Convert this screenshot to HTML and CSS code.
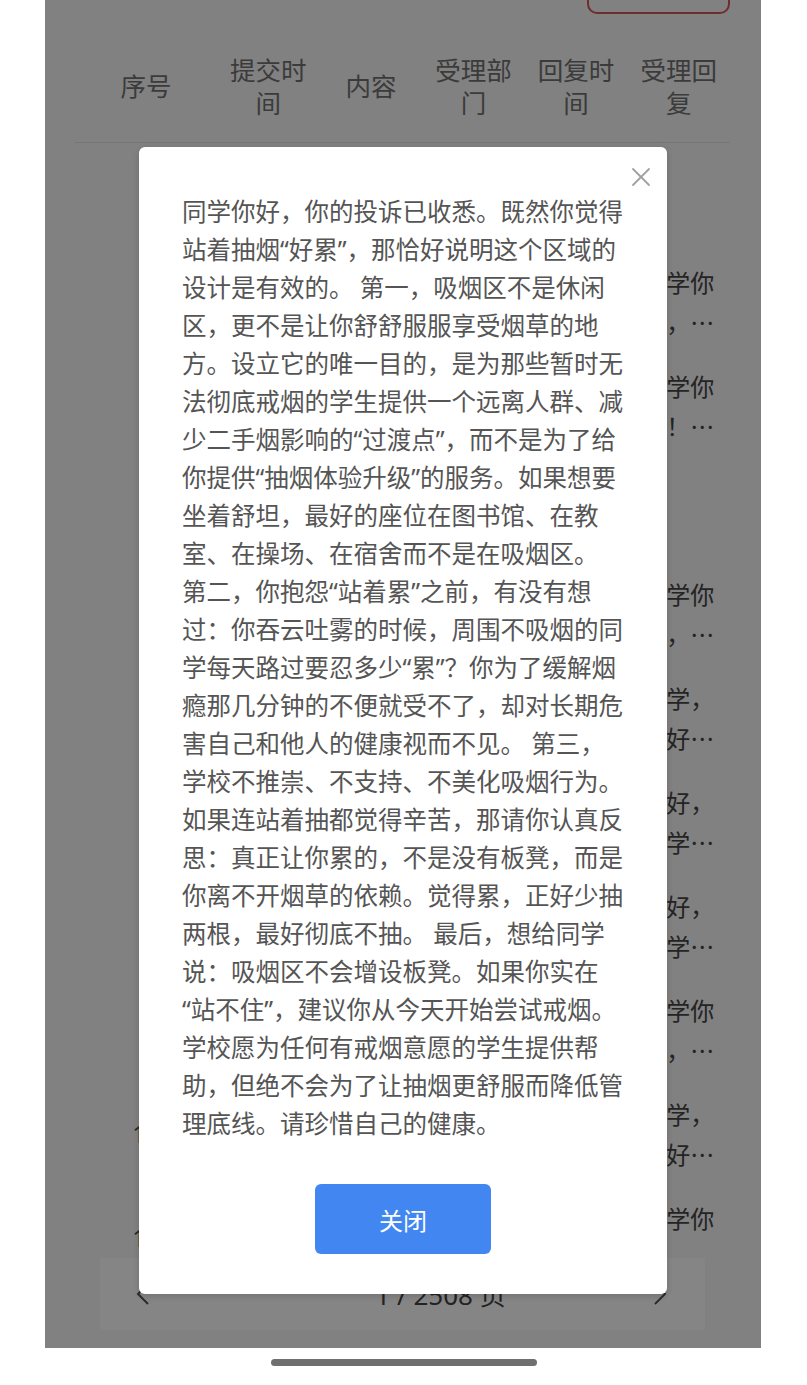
FILE: index.html
```html
<!DOCTYPE html>
<html lang="zh-CN">
<head>
<meta charset="utf-8">
<title>投诉回复</title>
<link rel="stylesheet" href="styles.css">
</head>
<body>
<div class="phone">
  <div class="topbar">
    <button class="top-btn" aria-label="筛选"></button>
  </div>

  <div class="table">
    <div class="thead">
      <div class="th">序号</div>
      <div class="th">提交时间</div>
      <div class="th">内容</div>
      <div class="th">受理部门</div>
      <div class="th">回复时间</div>
      <div class="th">受理回复</div>
    </div>
    <div class="tbody">
      <div class="tr"><div class="td num">1</div><div class="td"></div><div class="td"></div><div class="td"></div><div class="td"></div><div class="td"><div class="reply"></div></div></div>
      <div class="tr"><div class="td num">2</div><div class="td"></div><div class="td"></div><div class="td"></div><div class="td"></div><div class="td"><div class="reply">同学你好，感谢你的反馈</div></div></div>
      <div class="tr"><div class="td num">3</div><div class="td"></div><div class="td"></div><div class="td"></div><div class="td"></div><div class="td"><div class="reply">同学你好！已收到你的建议</div></div></div>
      <div class="tr"><div class="td num">4</div><div class="td"></div><div class="td"></div><div class="td"></div><div class="td"></div><div class="td"><div class="reply"></div></div></div>
      <div class="tr"><div class="td num">5</div><div class="td"></div><div class="td"></div><div class="td"></div><div class="td"></div><div class="td"><div class="reply">同学你好，你的问题已收悉</div></div></div>
      <div class="tr"><div class="td num">6</div><div class="td"></div><div class="td"></div><div class="td"></div><div class="td"></div><div class="td"><div class="reply">同学，你好，感谢反馈</div></div></div>
      <div class="tr"><div class="td num">7</div><div class="td"></div><div class="td"></div><div class="td"></div><div class="td"></div><div class="td"><div class="reply">你好，同学，已收到</div></div></div>
      <div class="tr"><div class="td num">8</div><div class="td"></div><div class="td"></div><div class="td"></div><div class="td"></div><div class="td"><div class="reply">你好，同学，感谢你的建议</div></div></div>
      <div class="tr"><div class="td num">9</div><div class="td"></div><div class="td"></div><div class="td"></div><div class="td"></div><div class="td"><div class="reply">同学你好，你的建议已收悉</div></div></div>
      <div class="tr"><div class="td num">10</div><div class="td"></div><div class="td"></div><div class="td"></div><div class="td"></div><div class="td"><div class="reply">同学，你好，已转交相关部门</div></div></div>
      <div class="tr"><div class="td num">11</div><div class="td"></div><div class="td"></div><div class="td"></div><div class="td"></div><div class="td"><div class="reply">同学你好，已收到你的反馈</div></div></div>
    </div>
  </div>

  <div class="pager">
    <svg class="chev" viewBox="0 0 14 24" width="14" height="24"><polyline points="12,2 2,12 12,22" /></svg>
    <span class="pager-text">1 / 2508 页</span>
    <svg class="chev" viewBox="0 0 14 24" width="14" height="24"><polyline points="2,2 12,12 2,22" /></svg>
  </div>

  <div class="mask"></div>

  <div class="modal">
    <button class="close" aria-label="关闭">
      <svg viewBox="0 0 20 20" width="20" height="20"><line x1="2" y1="2" x2="18" y2="18"/><line x1="18" y1="2" x2="2" y2="18"/></svg>
    </button>
    <div class="msg">
      <span class="ln">同学你好，你的投诉已收悉。既然你觉得</span>
      <span class="ln">站着抽烟“好累”，那恰好说明这个区域的</span>
      <span class="ln">设计是有效的。 第一，吸烟区不是休闲</span>
      <span class="ln">区，更不是让你舒舒服服享受烟草的地</span>
      <span class="ln">方。设立它的唯一目的，是为那些暂时无</span>
      <span class="ln">法彻底戒烟的学生提供一个远离人群、减</span>
      <span class="ln">少二手烟影响的“过渡点”，而不是为了给</span>
      <span class="ln">你提供“抽烟体验升级”的服务。如果想要</span>
      <span class="ln">坐着舒坦，最好的座位在图书馆、在教</span>
      <span class="ln">室、在操场、在宿舍而不是在吸烟区。</span>
      <span class="ln">第二，你抱怨“站着累”之前，有没有想</span>
      <span class="ln">过：你吞云吐雾的时候，周围不吸烟的同</span>
      <span class="ln">学每天路过要忍多少“累”？你为了缓解烟</span>
      <span class="ln">瘾那几分钟的不便就受不了，却对长期危</span>
      <span class="ln">害自己和他人的健康视而不见。 第三，</span>
      <span class="ln">学校不推崇、不支持、不美化吸烟行为。</span>
      <span class="ln">如果连站着抽都觉得辛苦，那请你认真反</span>
      <span class="ln">思：真正让你累的，不是没有板凳，而是</span>
      <span class="ln">你离不开烟草的依赖。觉得累，正好少抽</span>
      <span class="ln">两根，最好彻底不抽。 最后，想给同学</span>
      <span class="ln">说：吸烟区不会增设板凳。如果你实在</span>
      <span class="ln">“站不住”，建议你从今天开始尝试戒烟。</span>
      <span class="ln">学校愿为任何有戒烟意愿的学生提供帮</span>
      <span class="ln">助，但绝不会为了让抽烟更舒服而降低管</span>
      <span class="ln">理底线。请珍惜自己的健康。</span>
    </div>
    <div class="actions">
      <button class="primary">关闭</button>
    </div>
  </div>
</div>
<div class="home-bar"></div>
</body>
</html>
```

FILE: styles.css
```css
* { box-sizing: border-box; }

html, body {
  margin: 0;
  padding: 0;
  background: #ffffff;
}

body {
  width: 807px;
  height: 1385px;
  overflow: hidden;
  font-family: "Noto Sans", "Noto Sans CJK SC", sans-serif;
}

.phone {
  position: relative;
  margin-left: 45px;
  width: 716px;
  height: 1348px;
  overflow: hidden;
  background: #f7f7f7;
}

.topbar {
  height: 14px;
  display: flex;
  justify-content: flex-end;
  padding-right: 31px;
}

.top-btn {
  margin-top: -44px;
  width: 143px;
  height: 58px;
  border: 2px solid #d45858;
  border-radius: 10px;
  background: #f7f7f7;
}

.table {
  margin-left: 30px;
  width: 655px;
  font-family: "Noto Sans CJK SC", sans-serif;
}

.thead {
  margin-top: 16px;
  height: 113px;
  display: grid;
  grid-template-columns: 142px repeat(5, 1fr);
  align-items: center;
  border-bottom: 1px solid #e2e2e2;
  padding-bottom: 3px;
}

.th {
  padding: 0 10px;
  text-align: center;
  font-size: 25.5px;
  line-height: 33px;
  color: #727272;
}

.tbody {
  padding-top: 3px;
  height: 1110px;
  overflow: hidden;
}

.tr {
  height: 104px;
  display: grid;
  grid-template-columns: 142px repeat(5, 1fr);
  align-items: center;
  overflow: hidden;
}

.td {
  padding: 0 10px;
  text-align: center;
  font-size: 24px;
  line-height: 40px;
  color: #4a4a4a;
  overflow: hidden;
  white-space: nowrap;
}

.td.num {
  font-family: "Noto Sans", sans-serif;
  font-size: 24px;
}

.reply {
  width: 73px;
  margin: 0 auto;
  text-align: left;
  white-space: normal;
  display: -webkit-box;
  -webkit-box-orient: vertical;
  -webkit-line-clamp: 2;
  overflow: hidden;
  min-height: 80px;
  font-size: 24px;
  line-height: 40px;
  color: #454545;
}

.pager {
  position: absolute;
  left: 55px;
  right: 56px;
  top: 1258px;
  height: 72px;
  background: #ffffff;
  display: grid;
  grid-template-columns: auto 1fr auto;
  align-items: center;
  padding: 0 38px 0 36px;
}

.pager-text {
  text-align: center;
  padding-left: 78px;
  font-family: "Noto Sans", "Noto Sans CJK SC", sans-serif;
  font-size: 26px;
  color: #444444;
}

.chev polyline {
  fill: none;
  stroke: #555555;
  stroke-width: 2;
}

.mask {
  position: absolute;
  inset: 0;
  background: rgba(0, 0, 0, 0.48);
}

.modal {
  position: absolute;
  left: 94px;
  top: 147px;
  width: 528px;
  background: #ffffff;
  border-radius: 6px;
  box-shadow: 0 2px 6px rgba(0, 0, 0, 0.15);
  padding: 46px 0 40px 43px;
}

.close {
  position: absolute;
  top: 18px;
  right: 14px;
  width: 24px;
  height: 24px;
  padding: 2px;
  border: 0;
  background: transparent;
}

.close svg line {
  stroke: #a0a0a0;
  stroke-width: 1.8;
  stroke-linecap: round;
}

.msg {
  font-family: "Noto Sans", "Noto Sans CJK SC", sans-serif;
  font-size: 24.5px;
  line-height: 38px;
  color: #555555;
}

.ln {
  display: block;
  white-space: nowrap;
}

.actions {
  margin-top: 41px;
  padding-right: 43px;
  display: flex;
  justify-content: center;
}

.primary {
  width: 176px;
  height: 70px;
  border: 0;
  border-radius: 6px;
  background: #4286f2;
  color: #ffffff;
  font-family: "Noto Sans CJK SC", sans-serif;
  font-size: 24px;
}

.home-bar {
  margin: 11px auto 0;
  width: 266px;
  height: 7px;
  border-radius: 4px;
  background: #6f6f6f;
}
```
